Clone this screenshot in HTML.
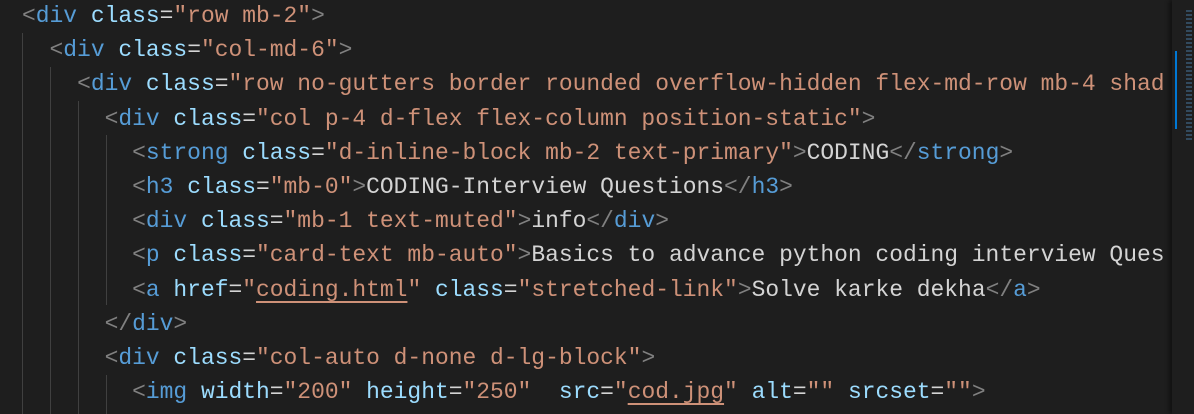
<html><head><style>
body{margin:0;background:#1e1e1e;width:1194px;height:414px;overflow:hidden;position:relative}
pre{position:absolute;left:22px;top:-1px;margin:0;font:22.95px/34.2px "Liberation Mono",monospace;color:#d4d4d4;white-space:pre}
.p{color:#808080}.t{color:#569cd6}.a{color:#9cdcfe}.s{color:#ce9178}
.u{text-decoration:underline;text-decoration-color:#ce9178;text-underline-offset:5px}
.g{position:absolute;width:1px;background:#404040}
#mm{position:absolute;left:1172px;top:0;width:22px;height:414px;background:#1e1e1e;box-shadow:-3px 0 4px rgba(0,0,0,.4)}
</style></head><body>
<div class="g" style="left:22px;top:33px;height:381px"></div>
<div class="g" style="left:50px;top:67px;height:347px"></div>
<div class="g" style="left:78px;top:101px;height:313px"></div>
<div class="g" style="left:106px;top:135px;height:170px"></div>
<div class="g" style="left:106px;top:375px;height:39px"></div>
<pre><span class="p">&lt;</span><span class="t">div</span> <span class="a">class</span>=<span class="s">"row mb-2"</span><span class="p">&gt;</span>
  <span class="p">&lt;</span><span class="t">div</span> <span class="a">class</span>=<span class="s">"col-md-6"</span><span class="p">&gt;</span>
    <span class="p">&lt;</span><span class="t">div</span> <span class="a">class</span>=<span class="s">"row no-gutters border rounded overflow-hidden flex-md-row mb-4 shad</span>
      <span class="p">&lt;</span><span class="t">div</span> <span class="a">class</span>=<span class="s">"col p-4 d-flex flex-column position-static"</span><span class="p">&gt;</span>
        <span class="p">&lt;</span><span class="t">strong</span> <span class="a">class</span>=<span class="s">"d-inline-block mb-2 text-primary"</span><span class="p">&gt;</span>CODING<span class="p">&lt;/</span><span class="t">strong</span><span class="p">&gt;</span>
        <span class="p">&lt;</span><span class="t">h3</span> <span class="a">class</span>=<span class="s">"mb-0"</span><span class="p">&gt;</span>CODING-Interview Questions<span class="p">&lt;/</span><span class="t">h3</span><span class="p">&gt;</span>
        <span class="p">&lt;</span><span class="t">div</span> <span class="a">class</span>=<span class="s">"mb-1 text-muted"</span><span class="p">&gt;</span>info<span class="p">&lt;/</span><span class="t">div</span><span class="p">&gt;</span>
        <span class="p">&lt;</span><span class="t">p</span> <span class="a">class</span>=<span class="s">"card-text mb-auto"</span><span class="p">&gt;</span>Basics to advance python coding interview Ques
        <span class="p">&lt;</span><span class="t">a</span> <span class="a">href</span>=<span class="s">"<span class="u">coding.html</span>"</span> <span class="a">class</span>=<span class="s">"stretched-link"</span><span class="p">&gt;</span>Solve karke dekha<span class="p">&lt;/</span><span class="t">a</span><span class="p">&gt;</span>
      <span class="p">&lt;/</span><span class="t">div</span><span class="p">&gt;</span>
      <span class="p">&lt;</span><span class="t">div</span> <span class="a">class</span>=<span class="s">"col-auto d-none d-lg-block"</span><span class="p">&gt;</span>
        <span class="p">&lt;</span><span class="t">img</span> <span class="a">width</span>=<span class="s">"200"</span> <span class="a">height</span>=<span class="s">"250"</span>  <span class="a">src</span>=<span class="s">"<span class="u">cod.jpg</span>"</span> <span class="a">alt</span>=<span class="s">""</span> <span class="a">srcset</span>=<span class="s">""</span><span class="p">&gt;</span></pre>
<div id="mm"></div>
<div style="position:absolute;left:1175px;top:51px;width:2px;height:78px;background:#0078d4"></div>
<div style="position:absolute;left:1186px;top:10px;width:6px;height:130px;opacity:.35;background:repeating-linear-gradient(#569cd6 0 2px,transparent 2px 4px)"></div>
</body></html>
